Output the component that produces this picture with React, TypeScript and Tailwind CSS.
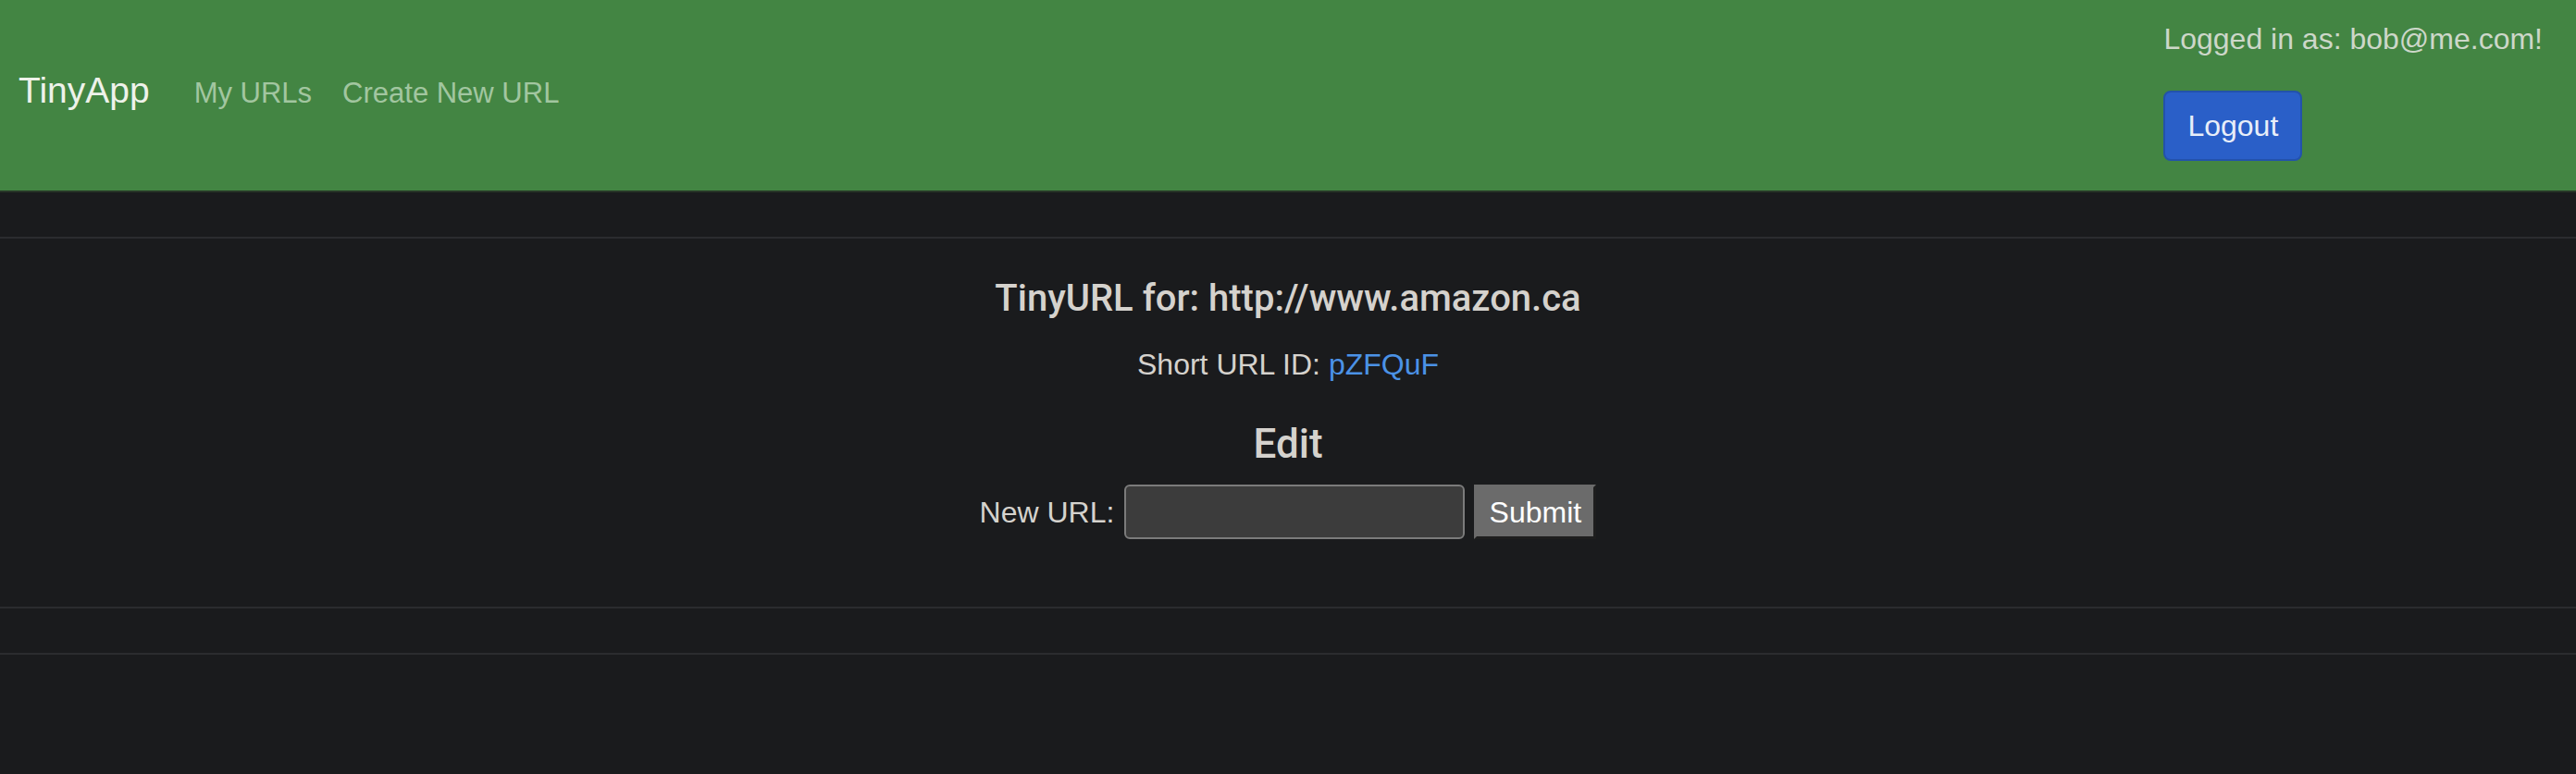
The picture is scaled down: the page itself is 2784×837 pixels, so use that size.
import React from "react";

export default function App() {
  return (
    <div className="min-h-screen bg-[#1a1b1d] font-['Liberation_Sans',Arial,sans-serif]">
      <nav className="flex h-[208px] items-start border-b-2 border-[#283628] bg-[#438543]">
        <div className="ml-[20px] mt-[68px] flex items-baseline">
          <a href="#" className="text-[39px] leading-[60px] text-[#eef2ea]">
            TinyApp
          </a>
          <a href="#" className="ml-[48px] text-[31px] leading-[48px] text-[#a2c6a0]">
            My URLs
          </a>
          <a href="#" className="ml-[33px] text-[31px] leading-[48px] text-[#a2c6a0]">
            Create New URL
          </a>
        </div>
        <div className="ml-auto mr-[36px] mt-[18px] flex flex-col items-start">
          <span className="text-[32px] leading-[48px] text-[#cdd7c9]">
            Logged in as: bob@me.com!
          </span>
          <button className="mt-[32px] h-[76px] rounded-[8px] border-2 border-[#2352ab] bg-[#2a5fc8] px-[24px] text-[32px] leading-[48px] text-[#e8eef9]">
            Logout
          </button>
        </div>
      </nav>

      <div className="pt-[48px]">
        <div className="border-t-2 border-[#2b2c2f] pb-[73px] pt-[41px] text-center text-[#d5d2cd]">
          <h5 className="font-['Roboto',sans-serif] text-[40px] font-medium leading-[48px]">
            TinyURL for: http://www.amazon.ca
          </h5>
          <p className="mt-[23px] text-[32px] leading-[48px]">
            Short URL ID: <a href="#" className="text-[#4b92e6]">pZFQuF</a>
          </p>
          <h3 className="mt-[36px] font-['Roboto',sans-serif] text-[44px] font-medium leading-[53px]">
            Edit
          </h3>
          <form className="mt-[17px] flex items-center justify-center">
            <label className="text-[32px] leading-[48px]">New URL:</label>
            <input
              type="text"
              className="ml-[11px] h-[59px] w-[368px] rounded-[6px] border-2 border-[#7b7b7b] bg-[#3c3c3c] px-3 text-[32px] text-white outline-none"
            />
            <button
              type="button"
              className="ml-[10px] h-[59px] w-[132px] border-[3px] border-b-[#1e1e1e] border-l-[#6b6b6b] border-r-[#1e1e1e] border-t-[#6b6b6b] bg-[#6b6b6b] text-[32px] leading-[48px] text-white"
            >
              Submit
            </button>
          </form>
        </div>
        <div className="h-[50px] border-t-2 border-[#2b2c2f]" />
        <div className="border-t-2 border-[#2b2c2f]" />
      </div>
    </div>
  );
}
